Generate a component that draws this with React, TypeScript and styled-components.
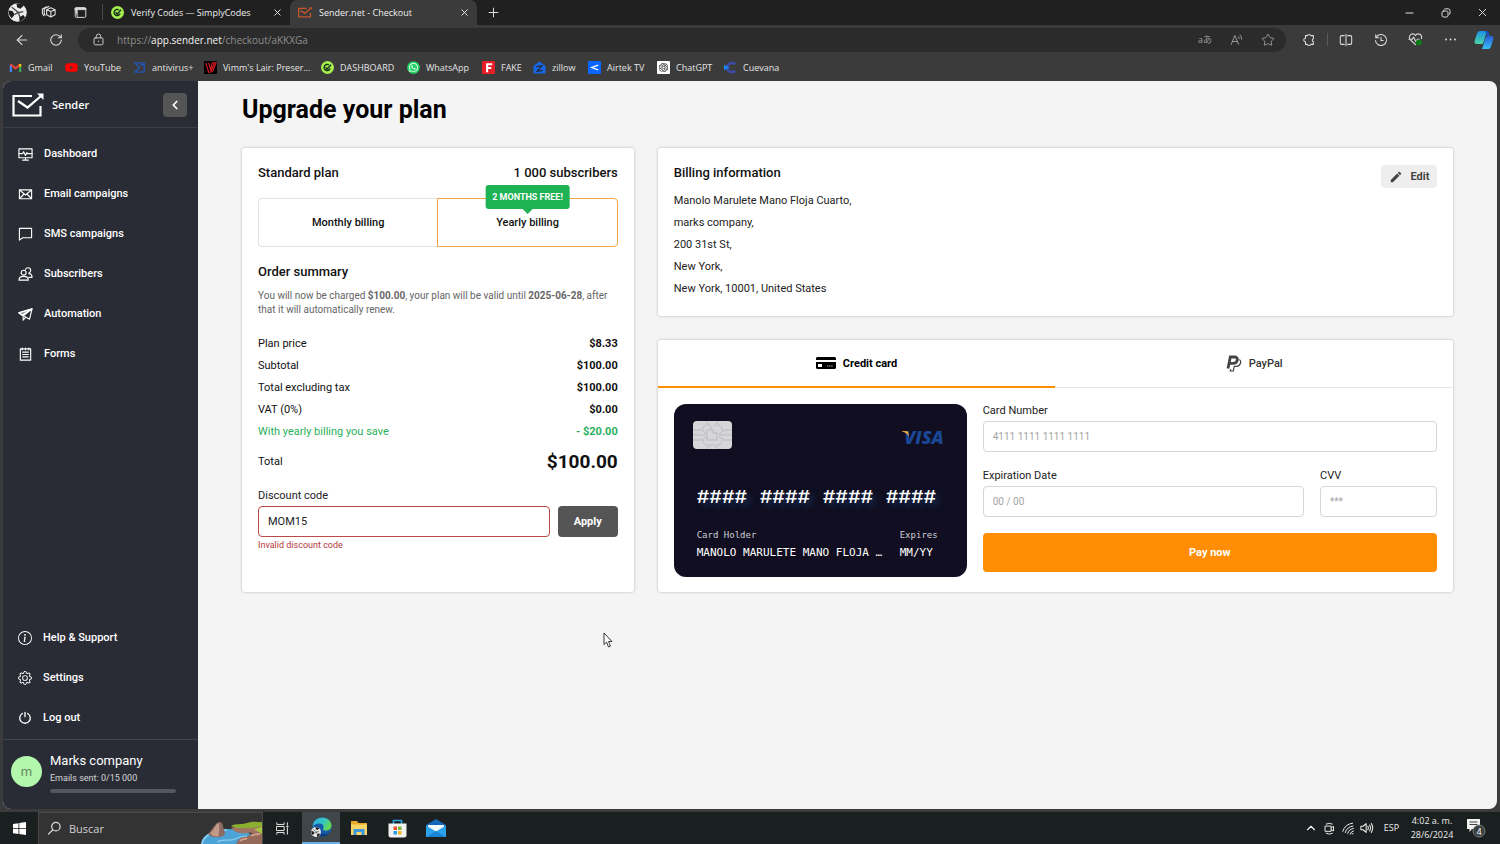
import React from 'react';
import styled, { createGlobalStyle, css } from 'styled-components';
import { X, Plus, ArrowLeft, RotateCw, Star, ChevronUp, ChevronLeft } from 'lucide-react';
import { FaYoutube, FaWhatsapp } from 'react-icons/fa';
import { BsGear, BsInfoCircle } from 'react-icons/bs';
import { SiOpenai } from 'react-icons/si';
import { MdEdit } from 'react-icons/md';

const chromeFont = '"Open Sans", "Noto Sans", "Noto Sans CJK JP", sans-serif';
const monoFont = '"DejaVu Sans Mono", "Liberation Mono", monospace';

const GlobalStyle = createGlobalStyle`
  *, *::before, *::after { box-sizing: border-box; }
  body { margin: 0; background: #3b3b3b; font-family: Roboto, sans-serif; color: #111; }
  button, input { font-family: inherit; margin: 0; }
  button { padding: 0; border: 0; background: none; color: inherit; cursor: pointer; }
  h1, h2, p, dl, dd, address { margin: 0; font-style: normal; }
  a { color: inherit; text-decoration: none; }
  svg { display: block; flex: none; }
`;

const Desktop = styled.div`
  min-height: 100vh;
  display: flex;
  flex-direction: column;
`;

/* ---------- Browser chrome ---------- */

const TabStrip = styled.header`
  display: flex;
  height: 25px;
  background: #202020;
  color: #f0f0f0;
  font: 9px/25px ${chromeFont};
`;

const ChromeButton = styled.button<{ $w: number }>`
  width: ${p => p.$w}px;
  display: flex;
  align-items: center;
  justify-content: center;
  flex: none;
  color: #dcdcdc;
`;

const StripDivider = styled.span`
  width: 1px;
  height: 16px;
  margin: 4px 0 0 4px;
  background: #4a4a4a;
`;

const Tab = styled.div<{ $active?: boolean }>`
  width: 187px;
  display: flex;
  align-items: center;
  gap: 7px;
  padding: 0 7px 0 8px;
  border-radius: 7px 7px 0 0;
  background: ${p => (p.$active ? '#3b3b3b' : 'transparent')};
  span { flex: 1; white-space: nowrap; }
`;

const Spacer = styled.span`
  flex: 1;
`;

const Toolbar = styled.div`
  display: flex;
  align-items: center;
  height: 29px;
  padding-left: 5px;
  color: #dcdcdc;
`;

const AddressBar = styled.div`
  flex: 1;
  height: 24px;
  margin: 0 5px;
  padding: 0 3px 0 14px;
  display: flex;
  align-items: center;
  border-radius: 12px;
  background: #2b2b2b;
  color: #8f8f8f;
  font: 10px/24px ${chromeFont};
  b { font-weight: 400; color: #f5f5f5; }
`;

const Url = styled.span`
  flex: 1;
  padding-left: 12px;
`;

const Glyph = styled.span`
  font-size: 9px;
  color: #9b9b9b;
`;

const ToolDivider = styled.span`
  width: 1px;
  height: 13px;
  background: #5a5a5a;
`;

const Bookmarks = styled.nav`
  display: flex;
  align-items: center;
  height: 27px;
  padding: 0 0 1px 9px;
  color: #e4e4e4;
  font: 9px/25px ${chromeFont};
`;

const Bookmark = styled.a<{ $w: number }>`
  width: ${p => p.$w}px;
  display: flex;
  align-items: center;
  gap: 6px;
  white-space: nowrap;
`;

const Viewport = styled.div`
  flex: 1;
  display: flex;
  margin: 0 3px;
  border-radius: 8px;
  overflow: hidden;
  background: #f4f4f4;
`;

/* ---------- Sidebar ---------- */

const Sidebar = styled.aside`
  width: 195px;
  flex: none;
  display: flex;
  flex-direction: column;
  background: #292c35;
  color: #fff;
`;

const Brand = styled.div`
  height: 47px;
  display: flex;
  align-items: center;
  gap: 8px;
  padding: 2px 11px 0 9px;
  border-bottom: 1px solid #393e4b;
  font: 600 11px/16px ${chromeFont};
  span { flex: 1; }
`;

const Collapse = styled.button`
  width: 24px;
  height: 24px;
  display: grid;
  place-items: center;
  border-radius: 4px;
  background: #555;
`;

const Menu = styled.nav<{ $grow?: boolean }>`
  display: flex;
  flex-direction: column;
  ${p => (p.$grow ? css`flex: 1; padding-top: 6px;` : css`padding-bottom: 1px;`)}
`;

const MenuLink = styled.a`
  height: 40px;
  display: flex;
  align-items: center;
  gap: 11px;
  padding-left: 15px;
  font-size: 11px;
  font-weight: 500;
  line-height: 16px;
`;

const Account = styled.div`
  height: 70px;
  display: flex;
  gap: 8px;
  padding: 14px 22px 0 8px;
  border-top: 1px solid #42464f;
`;

const Avatar = styled.span`
  width: 31px;
  height: 31px;
  margin-top: 2px;
  border-radius: 50%;
  background: #b2f7ac;
  color: #66885f;
  font-size: 13px;
  line-height: 31px;
  text-align: center;
`;

const AccountText = styled.div`
  flex: 1;
  font-size: 13px;
  font-weight: 400;
  line-height: 14px;
  small { display: block; margin: 4px 0; font-size: 9px; font-weight: 400; line-height: 12px; color: #d5d6d9; }
`;

const Quota = styled.div`
  height: 4px;
  margin-top: 5px;
  border-radius: 2px;
  background: #53565e;
`;

/* ---------- Checkout ---------- */

const Main = styled.main`
  flex: 1;
  position: relative;
  padding: 14px 44px 16px;
`;

const Title = styled.h1`
  margin-bottom: 23px;
  font-size: 25px;
  font-weight: 700;
  line-height: 30px;
  color: #000;
`;

const Columns = styled.div`
  display: grid;
  grid-template-columns: 33fr 67fr;
  gap: 24px;
`;

const Stack = styled.div`
  display: flex;
  flex-direction: column;
  gap: 24px;
`;

const Card = styled.section<{ $flush?: boolean }>`
  padding: ${p => (p.$flush ? '0' : '17px 16px 16px')};
  border-radius: 3px;
  background: #fff;
  box-shadow: 0 0 3px rgba(0, 0, 0, 0.25);
`;

const Between = styled.div`
  display: flex;
  justify-content: space-between;
`;

const Heading = styled.h2`
  font-size: 13px;
  font-weight: 500;
  line-height: 16px;
  color: #111;
`;

const Periods = styled.div`
  display: flex;
  height: 49px;
  margin: 17px 0;
`;

const Period = styled.button<{ $selected?: boolean }>`
  flex: 1;
  position: relative;
  border: 1px solid ${p => (p.$selected ? '#f0a545' : '#e2e2e2')};
  border-right-width: ${p => (p.$selected ? 1 : 0)}px;
  border-radius: ${p => (p.$selected ? '0 4px 4px 0' : '4px 0 0 4px')};
  color: #111;
  font-size: 11px;
  font-weight: 500;
  line-height: 16px;
`;

const Ribbon = styled.span`
  position: absolute;
  top: -14px;
  left: 50%;
  transform: translateX(-50%);
  height: 24px;
  padding: 0 7px;
  border-radius: 3px;
  background: #1fb254;
  color: #fff;
  font-size: 9px;
  font-weight: 700;
  line-height: 24px;
  white-space: nowrap;
  &::after {
    content: '';
    position: absolute;
    top: 24px;
    left: 50%;
    margin-left: -5px;
    border: 5px solid transparent;
    border-top-color: #1fb254;
    border-bottom: 0;
  }
`;

const Note = styled.p`
  margin: 9px 0 16px;
  color: #666;
  font-size: 10px;
  line-height: 14px;
  b { font-weight: 700; }
`;

const Line = styled.div<{ $saving?: boolean; $total?: boolean }>`
  display: flex;
  justify-content: space-between;
  font-size: 11px;
  line-height: ${p => (p.$total ? 38 : 22)}px;
  color: ${p => (p.$saving ? '#2bb05c' : '#111')};
  dd { font-weight: 700; font-size: ${p => (p.$total ? 19 : 11)}px; }
`;

const Label = styled.label`
  display: block;
  margin-bottom: 4px;
  font-size: 11px;
  line-height: 13px;
  color: #222;
`;

const Input = styled.input<{ $error?: boolean }>`
  display: block;
  width: 100%;
  min-width: 0;
  height: 31px;
  padding: 0 9px;
  border: 1px solid ${p => (p.$error ? '#bb4b4b' : '#d6d6d6')};
  border-radius: 4px;
  background: #fff;
  color: #222;
  font-size: 11px;
  outline: 0;
  &::placeholder { color: #a3a3a3; opacity: 1; font-size: 10px; }
`;

const Discount = styled.form`
  margin-top: 8px;
`;

const DiscountRow = styled.div`
  display: flex;
  gap: 8px;
`;

const Apply = styled.button`
  width: 60px;
  height: 31px;
  flex: none;
  border-radius: 4px;
  background: #555;
  color: #fff;
  font-size: 11px;
  font-weight: 700;
`;

const ErrorText = styled.p`
  margin-top: 2px;
  color: #b23a3a;
  font-size: 9px;
  line-height: 12px;
`;

const Address = styled.address`
  margin-top: 2px;
  font-size: 11px;
  line-height: 22px;
  color: #222;
`;

const Edit = styled.button`
  width: 56px;
  height: 23px;
  display: flex;
  align-items: center;
  justify-content: center;
  gap: 8px;
  border-radius: 4px;
  background: #eee;
  color: #444;
  font-size: 11px;
  font-weight: 700;
`;

const Methods = styled.div`
  display: flex;
  height: 48px;
  border-bottom: 1px solid #e6e6e6;
`;

const Method = styled.button<{ $active?: boolean }>`
  flex: 1;
  height: 48px;
  display: flex;
  align-items: center;
  justify-content: center;
  gap: 7px;
  border-bottom: 2px solid ${p => (p.$active ? '#ff8e05' : 'transparent')};
  color: ${p => (p.$active ? '#000' : '#333')};
  font-size: 11px;
  font-weight: ${p => (p.$active ? 700 : 500)};
`;

const Payment = styled.div`
  display: flex;
  gap: 16px;
  padding: 16px 16px 15px;
`;

const BankCard = styled.div`
  width: 293px;
  height: 173px;
  flex: none;
  padding: 17px 23px 0;
  display: flex;
  flex-direction: column;
  border-radius: 12px;
  background: #100e20;
  color: #fff;
  font-family: ${monoFont};
`;

const CardTop = styled.div`
  display: flex;
  justify-content: space-between;
  margin-left: -4px;
`;

const Visa = styled.span`
  position: relative;
  margin-top: 4px;
  color: #1a4795;
  font: italic 800 18px/24px ${chromeFont};
  svg { position: absolute; left: -2px; top: 6px; }
`;

const CardDigits = styled.div`
  margin: 37px 0 16px;
  font-family: "Liberation Mono", monospace;
  font-size: 21px;
  font-weight: 700;
  line-height: 24px;
  white-space: nowrap;
  text-shadow: 4px 4px 6px #14305a;
`;

const CardBottom = styled.div`
  display: flex;
  justify-content: space-between;
  font-size: 11px;
  line-height: 18px;
  white-space: nowrap;
  small { display: block; font-size: 9px; color: #cfcfd6; }
`;

const Expiry = styled.div`
  width: 44px;
`;

const CardForm = styled.form`
  flex: 1;
  min-width: 0;
`;

const FieldRow = styled.div`
  display: flex;
  gap: 16px;
  margin: 17px 0 16px;
`;

const Field = styled.div<{ $narrow?: boolean }>`
  ${p => (p.$narrow ? css`width: 117px;` : css`flex: 1; min-width: 0;`)}
`;

const Pay = styled.button`
  width: 100%;
  height: 39px;
  border-radius: 4px;
  background: #ff8e05;
  color: #fff;
  font-size: 11px;
  font-weight: 700;
`;

const Pointer = styled.svg`
  position: absolute;
  left: 405px;
  top: 551px;
`;

/* ---------- Taskbar ---------- */

const Taskbar = styled.footer`
  display: flex;
  height: 32px;
  margin-top: 3px;
  background: #1a1f20;
  color: #eee;
  font-family: ${chromeFont};
`;

const TaskButton = styled.button<{ $w: number; $active?: boolean }>`
  width: ${p => p.$w}px;
  display: grid;
  place-items: center;
  flex: none;
  background: ${p => (p.$active ? '#40474a' : 'transparent')};
  border-bottom: ${p => (p.$active ? '2px solid #68aee6' : '0')};
`;

const SearchBox = styled.label`
  width: 225px;
  display: flex;
  align-items: center;
  gap: 7px;
  padding-left: 8px;
  border: 1px solid #4a4a4a;
  border-bottom: 0;
  background: #333;
  color: #ddd;
`;

const SearchInput = styled.input`
  flex: 1;
  min-width: 0;
  border: 0;
  padding: 0;
  background: none;
  outline: 0;
  font-size: 11px;
  &::placeholder { color: #d2d2d2; opacity: 1; }
`;

const IslandArt = styled.svg`
  align-self: flex-end;
`;

const Tray = styled.div`
  display: flex;
  align-items: center;
  font-size: 9px;
  line-height: 14px;
`;

const Language = styled.span`
  width: 31px;
  text-align: center;
`;

const Clock = styled.time`
  width: 50px;
  text-align: center;
`;

/* ---------- Drawings ---------- */

const Stroke = ({ size = 14, box = 16, w = 1.2, children }: { size?: number; box?: number; w?: number; children: React.ReactNode }) => (
  <svg width={size} height={size} viewBox={`0 0 ${box} ${box}`} fill="none" stroke="currentColor" strokeWidth={w} strokeLinecap="round" strokeLinejoin="round" aria-hidden="true">
    {children}
  </svg>
);

const ProfileBall = ({ size }: { size: number }) => (
  <svg width={size} height={size} viewBox="0 0 20 20" aria-hidden="true">
    <circle cx="10" cy="10" r="9.8" fill="#ececec" />
    <path d="M9 .6c3-.6 6 .4 7.500 2.200L13 6 9.500 4.500zM.6 8l4 .5L7 12l-3 4C1.500 14 .3 11 .6 8zM12 15l4-2.500L18 15c-1.500 2.500-4 4-6 4.400z" fill="#1d1d1d" />
    <path d="M4 4.500l7 5.500 5-1M7 12l4-2 1.500 5" stroke="#444" strokeWidth="1.300" fill="none" />
  </svg>
);

const CodesMark = () => (
  <svg width="13" height="13" viewBox="0 0 14 14" aria-hidden="true">
    <circle cx="7" cy="7" r="7" fill="#a6ee4e" />
    <path d="M8.500 4.200A3.300 3.300 0 1 0 9.800 8M5 6.800l1.700 1.700L10.800 4" fill="none" stroke="#16311c" strokeWidth="1.500" />
  </svg>
);

const SenderMark = ({ width, color, w }: { width: number; color: string; w: number }) => (
  <svg width={width} height={(width * 24) / 32} viewBox="0 0 32 24" fill="none" stroke={color} strokeWidth={w} aria-hidden="true">
    <path d="M20 3H1.500v19.500h27V13" />
    <path d="M6 8l9.500 6.500L29 3" />
    <path d="M25 .6h6.500V7z" fill={color} stroke="none" />
  </svg>
);

const GmailMark = () => (
  <svg width="13" height="13" viewBox="0 0 14 14" fill="none" strokeWidth="2.400" aria-hidden="true">
    <path d="M2 12V4" stroke="#4285f4" />
    <path d="M12 12V4" stroke="#34a853" />
    <path d="M1.500 3.500L7 8l5.500-4.500" stroke="#ea4335" />
    <path d="M12 6V3.200" stroke="#fbbc04" />
  </svg>
);

const SigmaMark = () => (
  <svg width="13" height="13" viewBox="0 0 14 14" fill="none" stroke="#2456b8" strokeWidth="1.500" aria-hidden="true">
    <path d="M1 2h11v10H1M2 2l5 5-5 5M12 4H8" />
  </svg>
);

const SquareMark = ({ bg, children }: { bg: string; children: React.ReactNode }) => (
  <svg width="13" height="13" viewBox="0 0 14 14" aria-hidden="true">
    <rect width="14" height="14" rx="1" fill={bg} />
    {children}
  </svg>
);

const WhatsAppMark = () => (
  <svg width="13" height="13" viewBox="0 0 14 14" aria-hidden="true">
    <circle cx="7" cy="7" r="6.800" fill="#25d366" />
    <g color="#fff"><FaWhatsapp x="1.500" y="1.500" size={11} /></g>
  </svg>
);

const ZillowMark = () => (
  <svg width="13" height="13" viewBox="0 0 14 14" aria-hidden="true">
    <path d="M7 .5l6.500 5v8H.5v-8z" fill="#1668e8" />
    <path d="M3.500 6.200l6-1.200-5 6 6-1" fill="none" stroke="#252c3b" strokeWidth="1.400" />
  </svg>
);

const ChatMark = () => (
  <SquareMark bg="#fff">
    <g color="#222"><SiOpenai x="2" y="2" size={10} /></g>
  </SquareMark>
);

const CuevanaMark = () => (
  <svg width="13" height="13" viewBox="0 0 14 14" fill="none" aria-hidden="true">
    <path d="M12 3.500A5 5 0 1 0 12 10.500" stroke="#3b4ba8" strokeWidth="3" />
    <path d="M0 4l6 3-6 3z" fill="#1c86f2" />
  </svg>
);

const Copilot = () => (
  <svg width="20" height="20" viewBox="0 0 20 20" aria-hidden="true">
    <defs>
      <linearGradient id="cpA" x1="0" y1="0" x2="0" y2="1"><stop offset="0" stopColor="#1f8fe8" /><stop offset="1" stopColor="#4ad6a5" /></linearGradient>
      <linearGradient id="cpB" x1="0" y1="0" x2="0" y2="1"><stop offset="0" stopColor="#2a5ad8" /><stop offset="1" stopColor="#35c4f5" /></linearGradient>
    </defs>
    <path d="M8 1h5l-3.500 11.500Q9 14 7 14H3q-3 0-2.400-3L3 3.500Q4 1 6 1z" fill="url(#cpA)" />
    <path d="M11 1h2q1.500 0 2 2l.8 3H13z" fill="#1a56b8" />
    <path d="M12 19H8l3.500-11Q12 6 14 6h3q3 0 2.300 3L17 16.500Q16.200 19 14 19z" fill="url(#cpB)" />
  </svg>
);

const CreditIcon = () => (
  <svg width="20" height="12" viewBox="0 0 20 12" aria-hidden="true">
    <path d="M1 0h18l1 1v2H0V1zM0 5h20v6l-1 1H1l-1-1z" fill="#000" />
    <rect x="2" y="7" width="4" height="3" fill="#fff" />
    <path d="M11 9h6" stroke="#aaa" strokeDasharray="1.500 .6" />
  </svg>
);

const PayPalMark = () => (
  <svg width="16" height="17" viewBox="0 0 16 17" fill="none" stroke="#444" aria-hidden="true">
    <path d="M2 13.500L4.300 2H8.500Q12 2 11.300 5.200 10.600 8.300 7 8.300H3.500" strokeWidth="2.800" />
    <path d="M13.300 4.500Q15.300 5.500 14.500 8.300 13.500 11.500 9.800 11.300H8.300L7.300 16H4.300L4.800 14.200" strokeWidth="1.200" />
  </svg>
);

const Chip = () => (
  <svg width="39" height="28" viewBox="0 0 39 28" aria-hidden="true">
    <rect width="39" height="28" rx="4" fill="#d6d6d8" />
    <g fill="none" stroke="#b4b4b8" strokeWidth=".8">
      <path d="M14 9h6v3h4v7H14zM0 9h9l4 4M0 19h9l4-3M0 14h12M39 9h-8l-5 4M39 19h-8l-5-3M39 14H26M13 0l5 6v3M26 0l-5 5M13 28l6-5 7 5M10 9c0-4 3-6 5-5M29 9c0-4-3-6-5-4M10 19c0 4 3 6 6 5M29 19c0 4-3 6-6 5" />
    </g>
  </svg>
);

const EdgeIcon = () => (
  <svg width="21" height="21" viewBox="0 0 21 21" aria-hidden="true">
    <defs>
      <linearGradient id="edA" x1="0" y1="0" x2="1" y2=".5"><stop offset="0" stopColor="#2aa5e8" /><stop offset=".6" stopColor="#35c8c0" /><stop offset="1" stopColor="#65d84f" /></linearGradient>
    </defs>
    <circle cx="11" cy="10" r="9.500" fill="#155ba8" />
    <path d="M1.500 10C2 4 6 .5 11 .5c6 0 9.500 4 9.500 8 0 3-2.500 5-5.500 5-3 0-3.500-1.500-2.500-3C13 8 11 6.500 8 6.500 5 6.500 2.500 8 1.500 10z" fill="url(#edA)" />
    <path d="M8 12c0 4 4 6.500 10 4l-3 3-5 1z" fill="#0f3e80" />
    <svg x="0" y="10" width="10" height="10"><ProfileBall size={10} /></svg>
  </svg>
);

const FolderIcon = () => (
  <svg width="18" height="16" viewBox="0 0 18 16" aria-hidden="true">
    <path d="M1 1h6l1.500 2H17v12H1z" fill="#e5a92c" />
    <path d="M1 4.500h16V15H1z" fill="#fbd565" />
    <path d="M3.500 15V9h11v6h-3v-3h-5v3z" fill="#3e97dc" />
  </svg>
);

const StoreIcon = () => (
  <svg width="19" height="19" viewBox="0 0 19 19" aria-hidden="true">
    <path d="M5.500 5V1.500h8V5" fill="none" stroke="#2aa6e8" strokeWidth="1.600" />
    <path d="M.5 4.500h18V16q0 2.500-2.500 2.500H3Q.5 18.500.5 16z" fill="#f2f2f2" />
    <path d="M5.500 7.500H9V11H5.500z" fill="#e8502c" /><path d="M10 7.500h3.500V11H10z" fill="#7db82f" />
    <path d="M5.500 12H9v3.500H5.500z" fill="#2a9be0" /><path d="M10 12h3.500v3.500H10z" fill="#f5b622" />
  </svg>
);

const MailIcon = () => (
  <svg width="20" height="18" viewBox="0 0 20 18" aria-hidden="true">
    <path d="M10 0l10 6v11H0V6z" fill="#1565b8" />
    <path d="M2 6h16v6H2z" fill="#f3f8fc" />
    <path d="M0 6.500l10 6 10-6V18H0z" fill="#2ba2ea" />
    <path d="M0 18l10-6 10 6z" fill="#1c84d6" />
  </svg>
);

const Island = () => (
  <IslandArt width="61" height="24" viewBox="0 0 61 24" aria-hidden="true">
    <path d="M0 24C1 15 12 9 27 9c12 0 22 3 25 8l-2 7z" fill="#4ba3d8" />
    <path d="M1 24C2 16 12 10 26 10" fill="none" stroke="#8fd0ee" strokeWidth="1.500" />
    <path d="M16 22c6-4 12 0 18-3s10-3 12-3" fill="none" stroke="#8fcdea" strokeWidth="1.200" />
    <path d="M7 14c3-2 6-10 11-12 4-1 4 5 5 8 1 2 2 4-1 6-4 2-12 2-15-2z" fill="#8e6a60" />
    <path d="M9 13c4-2 5-8 8-10 3 3 0 9 1 13-3 1-7 0-9-3z" fill="#c29a88" />
    <path d="M30 8c5-2 12 0 18-3 5-1 9 0 13-1v10c-5 1-9-2-14-1-6 1-13 0-17-5z" fill="#a07564" />
    <path d="M30 6c5-3 10-1 16-3 5-2 10-1 15-1v5c-4-1-8 1-12 1-7 0-13 1-19-2z" fill="#8bb030" />
    <path d="M35 24c2-5 6-8 11-7 3-4 9-5 15-5v12z" fill="#94695a" />
    <path d="M39 21c2-2 4-3 7-2M50 16c3-2 6-2 9-2" fill="none" stroke="#cf9f8a" strokeWidth="2" />
    <path d="M53 9l8-2v7z" fill="#a4c73a" />
  </IslandArt>
);

const menuTop = [
  ['Dashboard', <><rect x="1" y="2" width="14" height="9.500" /><path d="M5 14h6M8 12v2M1 7h4l1-2 2 4 1.500-3 .8 1H15" /></>],
  ['Email campaigns', <><rect x="1.500" y="3" width="13" height="9.500" /><path d="M2 3.500l6 5 6-5M2 12l4-4M14 12l-4-4" /></>],
  ['SMS campaigns', <path d="M1.500 1.500h13v10H5L1.500 14z" />],
  ['Subscribers', <><circle cx="6" cy="6" r="2.600" /><path d="M1 14c0-3 2-4 5-4s5 1 5 4zM8 2.500C8.500 1 9.500.8 10.700.8c1.800 0 2.800 1.200 2.800 2.700 0 1.700-1 2.800-2 3.300 2.200.4 3.500 1.700 3.500 4.200h-3.500" /></>],
  ['Automation', <><path d="M15 2L.8 6.200l3.700 2.600L15 2 5.500 9.600V14l2.500-2.800M15 2l-2.700 11L7 10.200" /><path d="M.8 6.200L15 2 4.500 8.800z" fill="currentColor" fillOpacity=".5" /></>],
  ['Forms', <><path d="M2.500 2h11v12h-11z" /><path d="M4.500 1v2M8 1v2M11.500 1v2M5 5.500h6M5 8h6M5 10.500h6" /></>],
] as [string, React.ReactNode][];

const bookmarks = [
  ['Gmail', 56, <GmailMark />],
  ['YouTube', 68, <FaYoutube size={13} color="#f00" />],
  ['antivirus+', 71, <SigmaMark />],
  ["Vimm's Lair: Preser...", 117, <SquareMark bg="#000"><path d="M2 2l3 10h2l4-9M5 2l2 7 2-7h4l-4 10" stroke="#d31822" strokeWidth="1.300" fill="none" /></SquareMark>],
  ['DASHBOARD', 86, <CodesMark />],
  ['WhatsApp', 75, <WhatsAppMark />],
  ['FAKE', 51, <SquareMark bg="#e51f28"><path d="M5.500 12V3.500H11M5.500 7.500H10" stroke="#fff" strokeWidth="2.200" fill="none" /></SquareMark>],
  ['zillow', 55, <ZillowMark />],
  ['Airtek TV', 69, <SquareMark bg="#0a66ff"><path d="M11 4.500L4 7l7 2.500" stroke="#fff" strokeWidth="1.400" fill="none" /></SquareMark>],
  ['ChatGPT', 67, <ChatMark />],
  ['Cuevana', 60, <CuevanaMark />],
] as [string, number, React.ReactNode][];

const lines = [
  ['Plan price', '$8.33'],
  ['Subtotal', '$100.00'],
  ['Total excluding tax', '$100.00'],
  ['VAT (0%)', '$0.00'],
];

const BrowserChrome = () => (
  <>
    <TabStrip>
      <ChromeButton $w={34} aria-label="Profile"><ProfileBall size={19} /></ChromeButton>
      <ChromeButton $w={29} aria-label="Workspaces">
        <Stroke size={15}><path d="M6 5l4.500-2L15 5v5.500l-4.500 2.300L6 10.500zM6 5l4.500 2L15 5M10.500 7v5.500M3.800 3.800L8.500 1.500M3.500 4v6l1 .8M1.500 4.500V9l1.500 2.500M1.500 4.300L6 2" /></Stroke>
      </ChromeButton>
      <ChromeButton $w={35} aria-label="Tab actions">
        <Stroke size={13}><rect x="1.500" y="2" width="13" height="12" rx="1.500" /><path d="M1.500 2.500h13v2h-13zM1.500 4.500H4V14" fill="currentColor" strokeWidth=".8" /></Stroke>
      </ChromeButton>
      <StripDivider />
      <Tab>
        <CodesMark />
        <span>Verify Codes — SimplyCodes</span>
        <button aria-label="Close tab"><X size={11} strokeWidth={2} /></button>
      </Tab>
      <Tab $active>
        <SenderMark width={14} color="#c4552d" w={3} />
        <span>Sender.net - Checkout</span>
        <button aria-label="Close tab"><X size={11} strokeWidth={2} /></button>
      </Tab>
      <ChromeButton $w={32} aria-label="New tab"><Plus size={15} strokeWidth={1.6} /></ChromeButton>
      <Spacer />
      <ChromeButton $w={36} aria-label="Minimize"><Stroke size={10} box={10}><path d="M1 5h7" /></Stroke></ChromeButton>
      <ChromeButton $w={36} aria-label="Restore"><Stroke size={10} box={10} w={1}><rect x="1" y="3" width="6" height="6" rx="1.500" /><path d="M3 1.500q.5-.7 1.500-.7h2.700Q9 .8 9 2.600v2.500q0 1.200-1 1.600" /></Stroke></ChromeButton>
      <ChromeButton $w={36} aria-label="Close"><X size={13} strokeWidth={1.8} /></ChromeButton>
    </TabStrip>
    <Toolbar>
      <ChromeButton $w={34} aria-label="Back"><ArrowLeft size={16} strokeWidth={1.6} /></ChromeButton>
      <ChromeButton $w={34} aria-label="Refresh"><RotateCw size={14} strokeWidth={1.8} /></ChromeButton>
      <AddressBar>
        <Stroke size={13}><rect x="2.500" y="6" width="11" height="8.500" rx="1.500" stroke="#ccc" /><path d="M5.300 6V4a2.700 2.700 0 0 1 5.400 0v2M8 10v.6" stroke="#ccc" /></Stroke>
        <Url>https://<b>app.sender.net</b>/checkout/aKKXGa</Url>
        <ChromeButton $w={32} aria-label="Translate"><Glyph>aあ</Glyph></ChromeButton>
        <ChromeButton $w={31} aria-label="Read aloud">
          <Stroke size={13}><path d="M1.500 14L6 3l4.500 11M3 10.500h6M10.500 4.500q1 1 .8 2.500M12.500 2.500q2.200 2 1.700 5" stroke="#9b9b9b" /></Stroke>
        </ChromeButton>
        <ChromeButton $w={31} aria-label="Add to favorites"><Star size={14} strokeWidth={1.6} color="#9b9b9b" /></ChromeButton>
      </AddressBar>
      <ChromeButton $w={36} aria-label="Extensions">
        <Stroke size={14}><path d="M4 3h2.200a2 2 0 0 1 3.800 0H13v3.500a1.800 1.800 0 0 0 0 3.400V13h-3a2 2 0 0 1-3.800 0H4v-3a2 2 0 0 1 0-4z" /></Stroke>
      </ChromeButton>
      <ToolDivider />
      <ChromeButton $w={36} aria-label="Split screen">
        <Stroke size={14}><path d="M6 3H3q-1.500 0-1.500 1.500v7Q1.500 13 3 13h3M10 3h3q1.500 0 1.500 1.500v7Q14.500 13 13 13h-3M8 1.500v13" /></Stroke>
      </ChromeButton>
      <ChromeButton $w={34} aria-label="History">
        <Stroke size={14}><path d="M2 2v3.500h3.500M2.300 5.300a6.300 6.300 0 1 1-.6 3.200M8 5v3.500h2.500" /></Stroke>
      </ChromeButton>
      <ChromeButton $w={35} aria-label="Browser essentials">
        <Stroke size={15}><path d="M8 13.500L3 8.800M1.600 7.500C.8 4 3 2 5 2c1.400 0 2.500.8 3 1.800C8.500 2.800 9.600 2 11 2c2.200 0 4.200 2 3.400 5M1 7.700h3.500L6 5.500l2.500 5L10 7.700h2" /><circle cx="11.500" cy="11.300" r="3.200" fill="#0f7b16" stroke="none" /></Stroke>
      </ChromeButton>
      <ChromeButton $w={34} aria-label="More"><Stroke size={13} w={2.2}><path d="M2.500 8h.1M8 8h.1M13.500 8h.1" /></Stroke></ChromeButton>
      <ChromeButton $w={33} aria-label="Copilot"><Copilot /></ChromeButton>
    </Toolbar>
    <Bookmarks aria-label="Favorites">
      {bookmarks.map(([name, w, icon]) => (
        <Bookmark key={name} href="#" $w={w}>{icon}{name}</Bookmark>
      ))}
    </Bookmarks>
  </>
);

const SideMenu = () => (
  <Sidebar>
    <Brand>
      <SenderMark width={32} color="#fff" w={2.2} />
      <span>Sender</span>
      <Collapse aria-label="Collapse menu"><ChevronLeft size={14} strokeWidth={3} /></Collapse>
    </Brand>
    <Menu $grow>
      {menuTop.map(([name, icon]) => (
        <MenuLink key={name} href="#"><Stroke size={15}>{icon}</Stroke>{name}</MenuLink>
      ))}
    </Menu>
    <Menu>
      <MenuLink href="#"><BsInfoCircle size={14} />Help &amp; Support</MenuLink>
      <MenuLink href="#"><BsGear size={14} />Settings</MenuLink>
      <MenuLink href="#"><Stroke size={14} w={1.5}><path d="M5 2.800a6 6 0 1 0 6 0M8 1.500v5" /></Stroke>Log out</MenuLink>
    </Menu>
    <Account>
      <Avatar>m</Avatar>
      <AccountText>
        Marks company
        <small>Emails sent: 0/15 000</small>
        <Quota />
      </AccountText>
    </Account>
  </Sidebar>
);

const PlanCard = () => (
  <Card>
    <Between>
      <Heading>Standard plan</Heading>
      <Heading as="span">1 000 subscribers</Heading>
    </Between>
    <Periods>
      <Period>Monthly billing</Period>
      <Period $selected><Ribbon>2 MONTHS FREE!</Ribbon>Yearly billing</Period>
    </Periods>
    <Heading>Order summary</Heading>
    <Note>You will now be charged <b>$100.00</b>, your plan will be valid until <b>2025-06-28</b>, after that it will automatically renew.</Note>
    <dl>
      {lines.map(([name, value]) => (
        <Line key={name}><dt>{name}</dt><dd>{value}</dd></Line>
      ))}
      <Line $saving><dt>With yearly billing you save</dt><dd>- $20.00</dd></Line>
      <Line $total><dt>Total</dt><dd>$100.00</dd></Line>
    </dl>
    <Discount onSubmit={e => e.preventDefault()}>
      <Label htmlFor="discount">Discount code</Label>
      <DiscountRow>
        <Input id="discount" $error defaultValue="MOM15" />
        <Apply type="submit">Apply</Apply>
      </DiscountRow>
      <ErrorText>Invalid discount code</ErrorText>
    </Discount>
  </Card>
);

const BillingCard = () => (
  <Card>
    <Between>
      <Heading>Billing information</Heading>
      <Edit><MdEdit size={14} />Edit</Edit>
    </Between>
    <Address>
      Manolo Marulete Mano Floja Cuarto,<br />
      marks company,<br />
      200 31st St,<br />
      New York,<br />
      New York, 10001, United States
    </Address>
  </Card>
);

const PaymentCard = () => (
  <Card $flush>
    <Methods>
      <Method $active><CreditIcon />Credit card</Method>
      <Method><PayPalMark />PayPal</Method>
    </Methods>
    <Payment>
      <BankCard>
        <CardTop>
          <Chip />
          <Visa>
            <svg width="7" height="7" viewBox="0 0 7 7" aria-hidden="true"><path d="M0 0h4.500q1.500 0 1.800 1.500L7 6Q5 2 0 .6z" fill="#e9a435" /></svg>
            VISA
          </Visa>
        </CardTop>
        <CardDigits>#### #### #### ####</CardDigits>
        <CardBottom>
          <div><small>Card Holder</small>MANOLO MARULETE MANO FLOJA …</div>
          <Expiry><small>Expires</small>MM/YY</Expiry>
        </CardBottom>
      </BankCard>
      <CardForm onSubmit={e => e.preventDefault()}>
        <Field>
          <Label htmlFor="number">Card Number</Label>
          <Input id="number" placeholder="4111 1111 1111 1111" />
        </Field>
        <FieldRow>
          <Field>
            <Label htmlFor="expiry">Expiration Date</Label>
            <Input id="expiry" placeholder="00 / 00" />
          </Field>
          <Field $narrow>
            <Label htmlFor="cvv">CVV</Label>
            <Input id="cvv" placeholder="***" />
          </Field>
        </FieldRow>
        <Pay type="submit">Pay now</Pay>
      </CardForm>
    </Payment>
  </Card>
);

const WindowsTaskbar = () => (
  <Taskbar>
    <TaskButton $w={38} aria-label="Start">
      <svg width="13" height="13" viewBox="0 0 13 13" aria-hidden="true"><path d="M0 2l5.500-.8v5H0zM6.300 1L13 0v6.200H6.300zM0 7h5.500v5L0 11.200zM6.300 7H13v6l-6.700-1z" fill="#fff" /></svg>
    </TaskButton>
    <SearchBox>
      <Stroke size={15} w={1.3}><circle cx="9.500" cy="6" r="4.500" /><path d="M6.300 9.300L1.500 14" /></Stroke>
      <SearchInput placeholder="Buscar" aria-label="Buscar" />
      <Island />
    </SearchBox>
    <TaskButton $w={39} aria-label="Task view">
      <Stroke size={13}><path d="M1 1v2h9V1M1 15v-2h9v2M1 5.500h9v5H1zM14 1v3M14 7v8M13 5.500h2" /></Stroke>
    </TaskButton>
    <TaskButton $w={38} $active aria-label="Edge"><EdgeIcon /></TaskButton>
    <TaskButton $w={38} aria-label="File Explorer"><FolderIcon /></TaskButton>
    <TaskButton $w={38} aria-label="Store"><StoreIcon /></TaskButton>
    <TaskButton $w={40} aria-label="Mail"><MailIcon /></TaskButton>
    <Spacer />
    <Tray>
      <TaskButton $w={19} aria-label="Hidden icons"><ChevronUp size={14} strokeWidth={2} /></TaskButton>
      <TaskButton $w={19} aria-label="Meet now"><Stroke size={13}><rect x="3" y="5" width="7" height="6.500" /><path d="M10 7l3-1.500v5.500l-3-1.500M4 2.500q4-2 7.500 0M4 14q4 2 7.500 0" /></Stroke></TaskButton>
      <TaskButton $w={18} aria-label="Network"><Stroke size={13}><path d="M1 11.500A14 14 0 0 1 13 1.500M4 13A11 11 0 0 1 13.500 5M7 14a8 8 0 0 1 7-6M10 15q1-3.500 4-4M12.500 14.500h1" /></Stroke></TaskButton>
      <TaskButton $w={19} aria-label="Volume"><Stroke size={14}><path d="M1 6v4h2.500L7 13V3L3.500 6zM9 6q1 2 0 4M11 4.500q2 3.500 0 7M13 3q3 5 0 10" /></Stroke></TaskButton>
      <Language>ESP</Language>
      <Clock>4:02 a. m.<br />28/6/2024</Clock>
      <TaskButton $w={38} aria-label="Notifications">
        <svg width="20" height="20" viewBox="0 0 20 20" aria-hidden="true">
          <path d="M1 1h13v10H6l-2.500 3v-3H1z" fill="#f2f2f2" />
          <path d="M3.500 4h8M3.500 6.500h8" stroke="#444" />
          <circle cx="13" cy="13" r="6" fill="#3a3f40" stroke="#8b8f90" strokeWidth=".8" />
          <text x="13" y="16.500" textAnchor="middle" fontSize="9" fill="#fff">4</text>
        </svg>
      </TaskButton>
      <TaskButton $w={5} aria-label="Show desktop" />
    </Tray>
  </Taskbar>
);

export default function App() {
  return (
    <Desktop>
      <GlobalStyle />
      <BrowserChrome />
      <Viewport>
        <SideMenu />
        <Main>
          <Title>Upgrade your plan</Title>
          <Columns>
            <PlanCard />
            <Stack>
              <BillingCard />
              <PaymentCard />
            </Stack>
          </Columns>
          <Pointer width="10" height="16" viewBox="0 0 10 16" aria-hidden="true">
            <path d="M1 1v11.500l2.600-2.400L5.500 15l2-.9-2-4.600H9z" fill="#fff" stroke="#222" strokeWidth=".9" />
          </Pointer>
        </Main>
      </Viewport>
      <WindowsTaskbar />
    </Desktop>
  );
}
